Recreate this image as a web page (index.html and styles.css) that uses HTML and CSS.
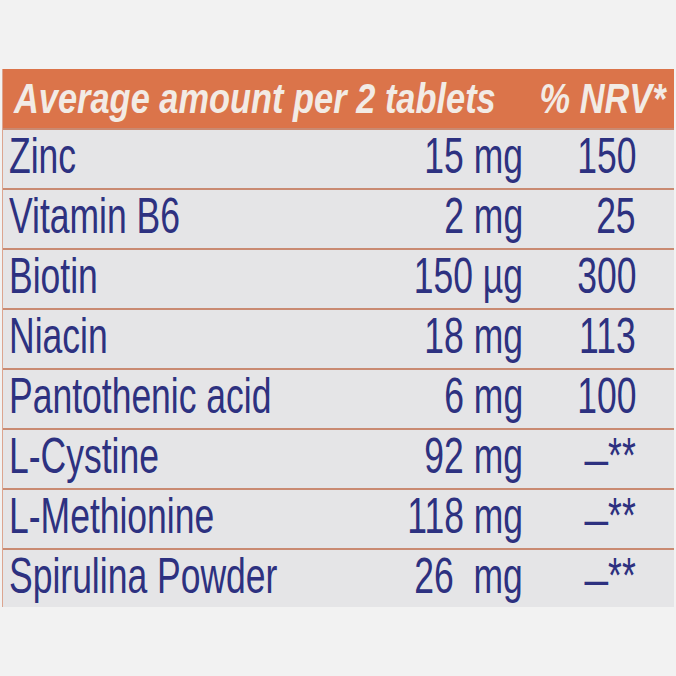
FILE: index.html
```html
<!DOCTYPE html>
<html lang="en">
<head>
<meta charset="utf-8">
<title>Nutrition table</title>
<link rel="stylesheet" href="styles.css">
</head>
<body>
<div class="panel">
  <div class="head">
    <div class="hcell hleft"><span class="ht">Average amount per 2 tablets</span></div>
    <div class="hcell hright"><span class="ht ht-r">% NRV*</span></div>
  </div>
  <div class="row">
    <div class="cell name"><span class="tx">Zinc</span></div>
    <div class="cell num"><span class="tx tx-r">15 mg</span></div>
    <div class="cell num"><span class="tx tx-r">150</span></div>
  </div>
  <div class="row">
    <div class="cell name"><span class="tx">Vitamin B6</span></div>
    <div class="cell num"><span class="tx tx-r">2 mg</span></div>
    <div class="cell num"><span class="tx tx-r">25</span></div>
  </div>
  <div class="row">
    <div class="cell name"><span class="tx">Biotin</span></div>
    <div class="cell num"><span class="tx tx-r">150 µg</span></div>
    <div class="cell num"><span class="tx tx-r">300</span></div>
  </div>
  <div class="row">
    <div class="cell name"><span class="tx">Niacin</span></div>
    <div class="cell num"><span class="tx tx-r">18 mg</span></div>
    <div class="cell num"><span class="tx tx-r">113</span></div>
  </div>
  <div class="row">
    <div class="cell name"><span class="tx">Pantothenic acid</span></div>
    <div class="cell num"><span class="tx tx-r">6 mg</span></div>
    <div class="cell num"><span class="tx tx-r">100</span></div>
  </div>
  <div class="row">
    <div class="cell name"><span class="tx">L-Cystine</span></div>
    <div class="cell num"><span class="tx tx-r">92 mg</span></div>
    <div class="cell num"><span class="tx tx-r"><span class="dash">–</span><span class="ast">**</span></span></div>
  </div>
  <div class="row">
    <div class="cell name"><span class="tx">L-Methionine</span></div>
    <div class="cell num"><span class="tx tx-r">118 mg</span></div>
    <div class="cell num"><span class="tx tx-r"><span class="dash">–</span><span class="ast">**</span></span></div>
  </div>
  <div class="row row-last">
    <div class="cell name"><span class="tx">Spirulina Powder</span></div>
    <div class="cell num"><span class="tx tx-r">26&nbsp;&nbsp;mg</span></div>
    <div class="cell num"><span class="tx tx-r"><span class="dash">–</span><span class="ast">**</span></span></div>
  </div>
</div>
</body>
</html>
```
FILE: styles.css
```css
html, body {
  margin: 0;
  padding: 0;
  background: #f2f2f2;
}

body {
  font-family: "Liberation Sans", Arial, sans-serif;
  overflow: hidden;
}

.panel {
  margin: 69px 0 0 2px;
  width: 672px;
  background: #e5e5e7;
  border-left: 1px solid #dca590;
  box-sizing: border-box;
}

.head {
  display: flex;
  height: 59px;
  background: #db744a;
  padding: 0 8px 0 11px;
}

.hcell {
  display: flex;
  min-width: 0;
}

.hleft {
  flex: 1;
  justify-content: flex-start;
}

.hright {
  width: 130px;
  justify-content: flex-end;
}

.ht {
  flex-shrink: 0;
  white-space: nowrap;
  font-size: 43px;
  line-height: 59px;
  font-weight: bold;
  font-style: italic;
  color: #f2ebe5;
  transform: scaleX(0.8);
  transform-origin: left center;
}

.ht-r {
  transform-origin: right center;
}

.row {
  display: grid;
  grid-template-columns: 1fr 140px 113px;
  padding: 0 38px 5px 6px;
  border-top: 2px solid #c98a72;
  height: 53px;
}

.row-last {
  height: 52px;
}

.cell {
  display: flex;
  min-width: 0;
}

.name {
  justify-content: flex-start;
}

.num {
  justify-content: flex-end;
}

.tx {
  flex-shrink: 0;
  white-space: nowrap;
  font-size: 50px;
  line-height: 53px;
  color: #2d3180;
  transform: scaleX(0.71);
  transform-origin: left center;
}

.tx-r {
  transform-origin: right center;
}

.dash {
  display: inline-block;
  transform: scaleX(1.2);
  transform-origin: right center;
}

.ast {
  vertical-align: 3px;
}
```
